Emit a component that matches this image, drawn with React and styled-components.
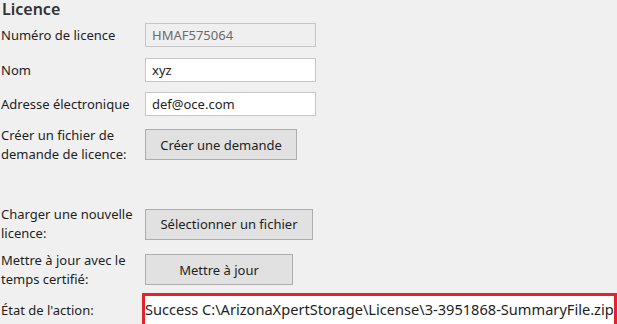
import React from "react";
import styled, { createGlobalStyle } from "styled-components";

const GlobalStyle = createGlobalStyle`
  body {
    margin: 0;
    background: #f0f0f0;
    font-family: "Noto Sans", "Open Sans", sans-serif;
    color: #1e1e1e;
    overflow: hidden;
  }
`;

const Page = styled.div`
  width: 617px;
  height: 324px;
  padding: 0 0 0 1px;
  box-sizing: border-box;
  overflow: hidden;
`;

const Heading = styled.h2`
  margin: 0;
  height: 20px;
  line-height: 19px;
  font-size: 16px;
  font-weight: 600;
  color: #333;
  padding-left: 1px;
`;

const Row = styled.div`
  display: flex;
  align-items: center;
  margin-top: ${(p) => p.$top}px;
  height: ${(p) => p.$height}px;
`;

const Label = styled.div`
  width: 144px;
  flex: none;
  font-size: 13px;
  line-height: 19px;
  padding-right: 4px;
  box-sizing: border-box;
`;

const Field = styled.div`
  width: 171px;
  height: 24px;
  box-sizing: border-box;
  border: 1px solid #c6c6c6;
  background: ${(p) => (p.$disabled ? "#efefef" : "#ffffff")};
  color: ${(p) => (p.$disabled ? "#6a6a6a" : "#1e1e1e")};
  font-size: 13px;
  line-height: 22px;
  padding-left: 6px;
`;

const Button = styled.div`
  width: ${(p) => p.$width}px;
  height: 31px;
  box-sizing: border-box;
  border: 1px solid #adadad;
  background: #e1e1e1;
  font-size: 13px;
  display: flex;
  align-items: center;
  justify-content: center;
  color: #1e1e1e;
`;

const Status = styled.div`
  flex: 1;
  height: 40px;
  margin-left: -3px;
  box-sizing: border-box;
  border: 3px solid #e8202a;
  border-bottom: none;
  background: #ffffff;
  font-size: 14.6px;
  line-height: 26px;
  white-space: nowrap;
  overflow: hidden;
  align-self: flex-start;
`;

export default function App() {
  return (
    <Page>
      <GlobalStyle />
      <Heading>Licence</Heading>
      <Row $top={3} $height={24}>
        <Label>Numéro de licence</Label>
        <Field $disabled>HMAF575064</Field>
      </Row>
      <Row $top={11} $height={24}>
        <Label>Nom</Label>
        <Field>xyz</Field>
      </Row>
      <Row $top={10} $height={24}>
        <Label>Adresse électronique</Label>
        <Field>def@oce.com</Field>
      </Row>
      <Row $top={13} $height={31}>
        <Label>Créer un fichier de demande de licence:</Label>
        <Button $width={152}>Créer une demande</Button>
      </Row>
      <Row $top={48} $height={32}>
        <Label>Charger une nouvelle licence:</Label>
        <Button $width={168}>Sélectionner un fichier</Button>
      </Row>
      <Row $top={14} $height={31}>
        <Label>Mettre à jour avec le temps certifié:</Label>
        <Button $width={148}>Mettre à jour</Button>
      </Row>
      <Row $top={8} $height={34}>
        <Label>État de l'action:</Label>
        <Status>Success C:\ArizonaXpertStorage\License\3-3951868-SummaryFile.zip</Status>
      </Row>
    </Page>
  );
}
